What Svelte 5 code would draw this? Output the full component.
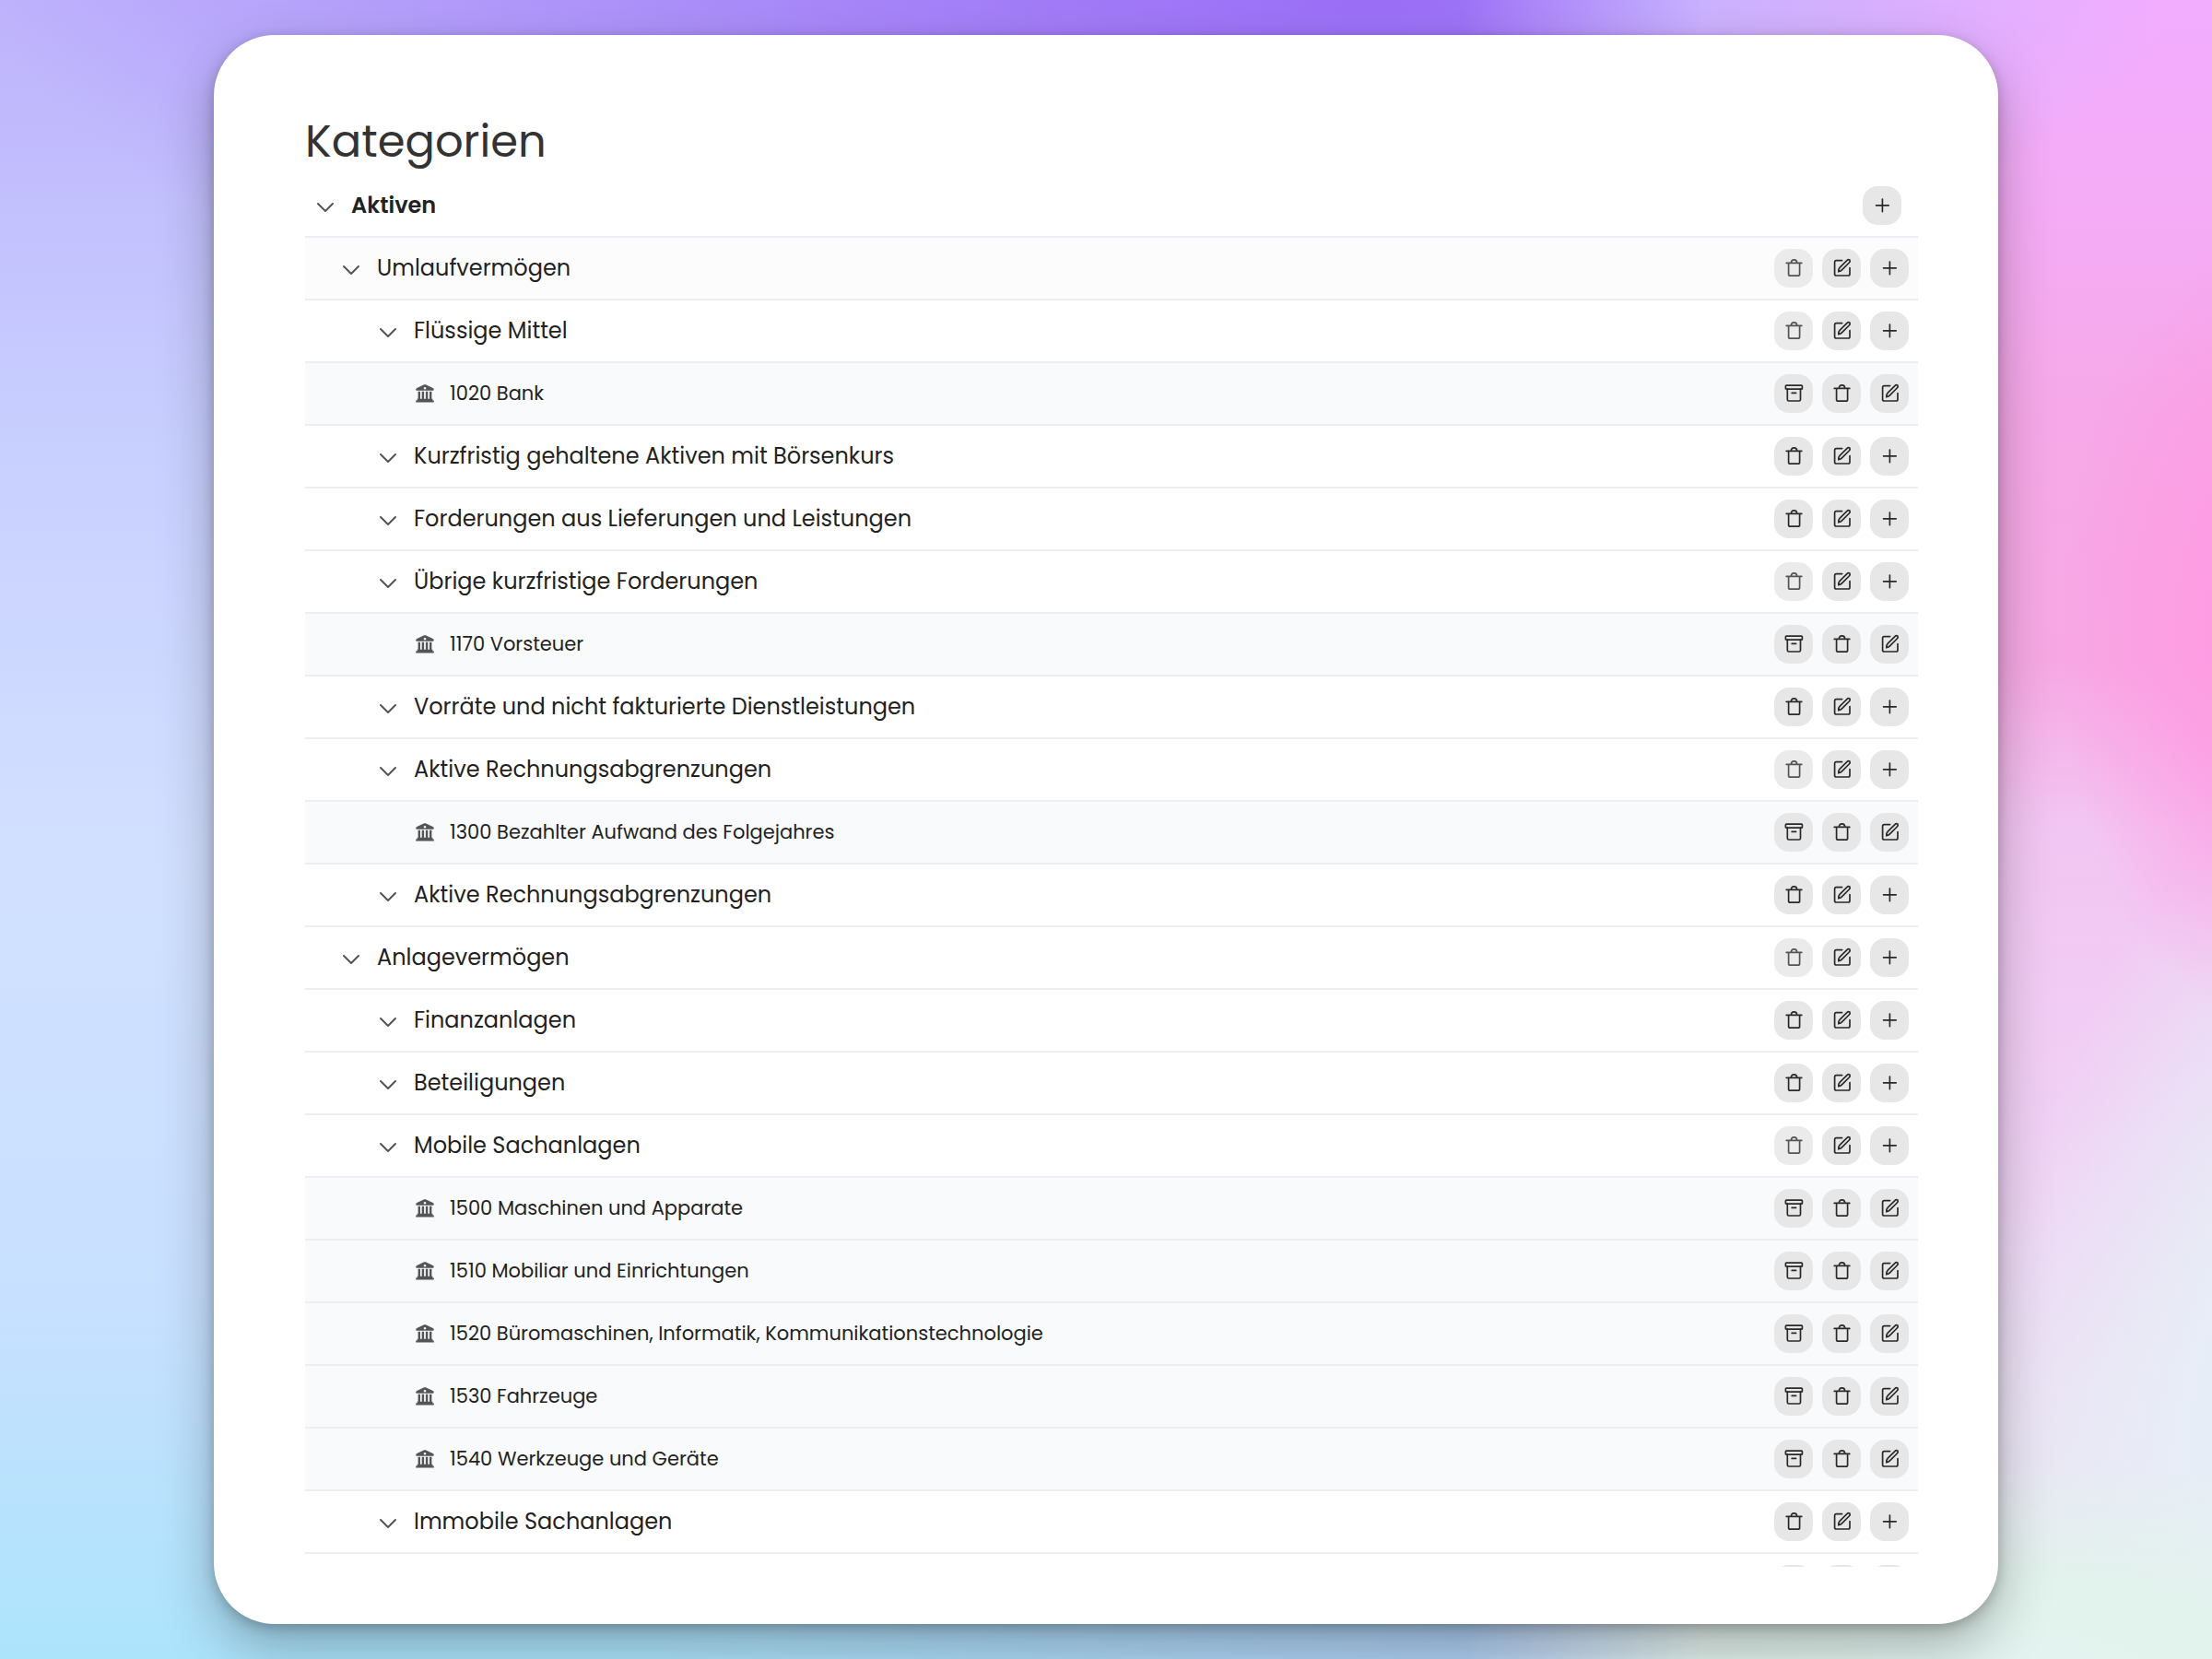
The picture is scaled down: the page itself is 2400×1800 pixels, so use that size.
<script lang="ts">
  type Action = "archive" | "trash" | "edit" | "plus";

  type Row = {
    label: string;
    level: number;
    account?: boolean;
    locked?: boolean; // still has accounts below it, so it can't be deleted
  };

  const rows: Row[] = [
    { label: "Aktiven", level: 0 },
    { label: "Umlaufvermögen", level: 1, locked: true },
    { label: "Flüssige Mittel", level: 2, locked: true },
    { label: "1020 Bank", level: 3, account: true },
    { label: "Kurzfristig gehaltene Aktiven mit Börsenkurs", level: 2 },
    { label: "Forderungen aus Lieferungen und Leistungen", level: 2 },
    { label: "Übrige kurzfristige Forderungen", level: 2, locked: true },
    { label: "1170 Vorsteuer", level: 3, account: true },
    { label: "Vorräte und nicht fakturierte Dienstleistungen", level: 2 },
    { label: "Aktive Rechnungsabgrenzungen", level: 2, locked: true },
    { label: "1300 Bezahlter Aufwand des Folgejahres", level: 3, account: true },
    { label: "Aktive Rechnungsabgrenzungen", level: 2 },
    { label: "Anlagevermögen", level: 1, locked: true },
    { label: "Finanzanlagen", level: 2 },
    { label: "Beteiligungen", level: 2 },
    { label: "Mobile Sachanlagen", level: 2, locked: true },
    { label: "1500 Maschinen und Apparate", level: 3, account: true },
    { label: "1510 Mobiliar und Einrichtungen", level: 3, account: true },
    { label: "1520 Büromaschinen, Informatik, Kommunikationstechnologie", level: 3, account: true },
    { label: "1530 Fahrzeuge", level: 3, account: true },
    { label: "1540 Werkzeuge und Geräte", level: 3, account: true },
    { label: "Immobile Sachanlagen", level: 2 },
    { label: "", level: 2 }, // not named yet
  ];

  const titles: Record<Action, string> = {
    archive: "Archivieren",
    trash: "Löschen",
    edit: "Bearbeiten",
    plus: "Hinzufügen",
  };

  function actionsFor(row: Row): Action[] {
    if (row.level === 0) return ["plus"];
    return row.account ? ["archive", "trash", "edit"] : ["trash", "edit", "plus"];
  }
</script>

{#snippet icon(name: Action)}
  <svg class="icon" viewBox="0 0 20 20" aria-hidden="true">
    {#if name === "archive"}
      <rect x="1.4" y="1.2" width="18" height="4" rx="0.8" />
      <path d="M3.3 5.2v11.2a1.6 1.6 0 0 0 1.6 1.6h11a1.6 1.6 0 0 0 1.6-1.6V5.2M8.2 9.4h4.4" />
    {:else if name === "trash"}
      <path d="M2.2 4.4h16.6M4.6 4.4v12a1.8 1.8 0 0 0 1.8 1.8h8.4a1.8 1.8 0 0 0 1.8-1.8v-12M7.3 4.4C7.3 2 8.4 0.8 10.5 0.8s3.2 1.2 3.2 3.6" />
    {:else if name === "edit"}
      <path d="M10.6 1.6H4.4a1.8 1.8 0 0 0-1.8 1.8v12.8A1.8 1.8 0 0 0 4.4 18h12.8a1.8 1.8 0 0 0 1.8-1.8V9.6" />
      <path d="M6.8 13.8c-0.2-2 0.3-3.4 1.5-4.6l7.6-7.6c0.9-0.9 2.1-1 3-0.6 0.5 1 0.3 2.1-0.6 3l-7.6 7.6c-1.1 1.2-2.3 1.8-3.9 2.2z" />
    {:else}
      <path d="M10.4 3v13.6M3.6 9.8h13.6" />
    {/if}
  </svg>
{/snippet}

<div class="page">
  <main class="card">
    <h1>Kategorien</h1>
    <ul class="tree">
      {#each rows as row}
        <li class="row level-{row.level}" class:account={row.account}>
          {#if row.account}
            <svg class="bank" viewBox="0 0 22 22" aria-hidden="true">
              <path
                fill-rule="evenodd"
                d="M11 1.2c0.5 0 0.9 0.1 1.3 0.3l7.4 3.4c0.7 0.3 1.1 0.9 1.1 1.6 0 0.8-0.5 1.3-1.3 1.3h-17C1.7 7.8 1.2 7.3 1.2 6.5c0-0.7 0.4-1.3 1.1-1.6l7.4-3.4c0.4-0.2 0.8-0.3 1.3-0.3zM11 4a1.3 1.3 0 1 0 0 2.6A1.3 1.3 0 0 0 11 4z"
              />
              <path d="M3.6 8.8h2.4v8.2H3.6zM7.7 8.8h2.4v8.2H7.7zM11.9 8.8h2.4v8.2h-2.4zM16 8.8h2.4v8.2H16z" />
              <path d="M2.6 16.8h16.8v1.6h1.4v2.2H1.2v-2.2h1.4z" />
            </svg>
          {:else}
            <button class="toggle" type="button" aria-label="Einklappen">
              <svg viewBox="0 0 20 20" aria-hidden="true"><path d="M2 8l8 8 8-8" /></svg>
            </button>
          {/if}
          <span class="label">{row.label}</span>
          <div class="actions">
            {#each actionsFor(row) as action}
              <button
                class="action"
                type="button"
                aria-label={titles[action]}
                disabled={action === "trash" && row.locked}
              >
                {@render icon(action)}
              </button>
            {/each}
          </div>
        </li>
      {/each}
    </ul>
  </main>
</div>

<style>
  :global(body) {
    margin: 0;
  }

  .page {
    position: relative;
    isolation: isolate;
    box-sizing: border-box;
    height: 100vh;
    padding: 38px 232px;
    overflow: hidden;
    font-family: Poppins, Inter, "Open Sans", sans-serif;
    color: #222;
    background:
      radial-gradient(ellipse 62% 24% at 62% 0%, #9b6ff7 0%, #9b6ff7cc 25%, #9b6ff700 100%) no-repeat,
      linear-gradient(to right, #aed4f400 30%, #aecdf2 70%) 0 100% / 100% 10% no-repeat,
      linear-gradient(to bottom, #beb2fc 0%, #c8d0ff 27%, #d2e0ff 52%, #c8e0ff 78%, #ace4fc 100%);
  }

  /* pink wash on the right side, faded in from the left */
  .page::before {
    content: "";
    position: absolute;
    inset: 0;
    z-index: -1;
    background:
      radial-gradient(ellipse 24% 14% at 74% 0%, #c6b2ff 0%, #c6b2ffaa 40%, #c6b2ff00 100%),
      radial-gradient(ellipse 26% 14% at 90% 102%, #e4f6f3 0%, #e2f2ec 50%, #e2f2ec00 100%),
      radial-gradient(ellipse 10% 24% at 103% 38%, #ff98e0 0%, #ff9ae2bb 45%, #ff9ae200 100%),
      radial-gradient(ellipse 18% 44% at 108% 90%, #e7edf6 0%, #e7edf6 50%, #e7edf600 100%),
      linear-gradient(to bottom, #f3adff 0%, #f4acf8 10%, #f6a8e8 25%, #f7a8e4 40%, #f2c6f2 50%, #f1cff5 66%, #ece2f5 84%, #e7ebf2 100%);
    mask-image: linear-gradient(to right, transparent 66%, #000 77%);
  }

  .card {
    box-sizing: border-box;
    display: flex;
    flex-direction: column;
    height: 100%;
    padding: 80px 87px 62px 99px;
    border-radius: 66px;
    background: #fff;
    box-shadow:
      0 4px 14px rgba(0, 0, 0, 0.22),
      0 26px 60px rgba(0, 0, 0, 0.28);
  }

  h1 {
    margin: 0;
    font-size: 48px;
    font-weight: 400;
    line-height: 72px;
    color: #333;
  }

  .tree {
    flex: 1;
    min-height: 0;
    margin: 0;
    padding: 0;
    overflow-y: auto;
    scrollbar-width: none;
    list-style: none;
  }

  .row {
    display: flex;
    align-items: center;
    gap: 18px;
    padding: 12px 10px 12px 80px;
    border-bottom: 2px solid #ededf2;
    font-size: 24px;
    line-height: 36px;
  }

  .level-0 {
    padding-left: 12px;
    padding-right: 18px;
    font-weight: 600;
  }

  .level-1 {
    padding-left: 40px;
  }

  .row:nth-child(2) {
    background: #fcfcfc;
  }

  .account {
    gap: 16px;
    padding-left: 119px;
    background: #f8fafc;
    font-size: 21px;
  }

  .label {
    flex: 1;
    min-width: 0;
  }

  .toggle {
    display: flex;
    padding: 0;
    border: 0;
    background: none;
    cursor: pointer;
  }

  .toggle svg {
    width: 20px;
    height: 20px;
    fill: none;
    stroke: #555;
    stroke-width: 2;
    stroke-linecap: round;
    stroke-linejoin: round;
  }

  .bank {
    width: 22px;
    height: 22px;
    fill: #555;
  }

  .actions {
    display: flex;
    gap: 10px;
  }

  .action {
    display: flex;
    align-items: center;
    justify-content: center;
    width: 42px;
    height: 42px;
    padding: 0;
    border: 0;
    border-radius: 16px;
    background: #e7e7e7;
    color: #2a2a2a;
    cursor: pointer;
  }

  .action:disabled {
    opacity: 0.8;
    cursor: default;
  }

  .icon {
    width: 20px;
    height: 20px;
    overflow: visible;
    fill: none;
    stroke: currentColor;
    stroke-width: 1.7;
    stroke-linecap: round;
    stroke-linejoin: round;
  }
</style>
